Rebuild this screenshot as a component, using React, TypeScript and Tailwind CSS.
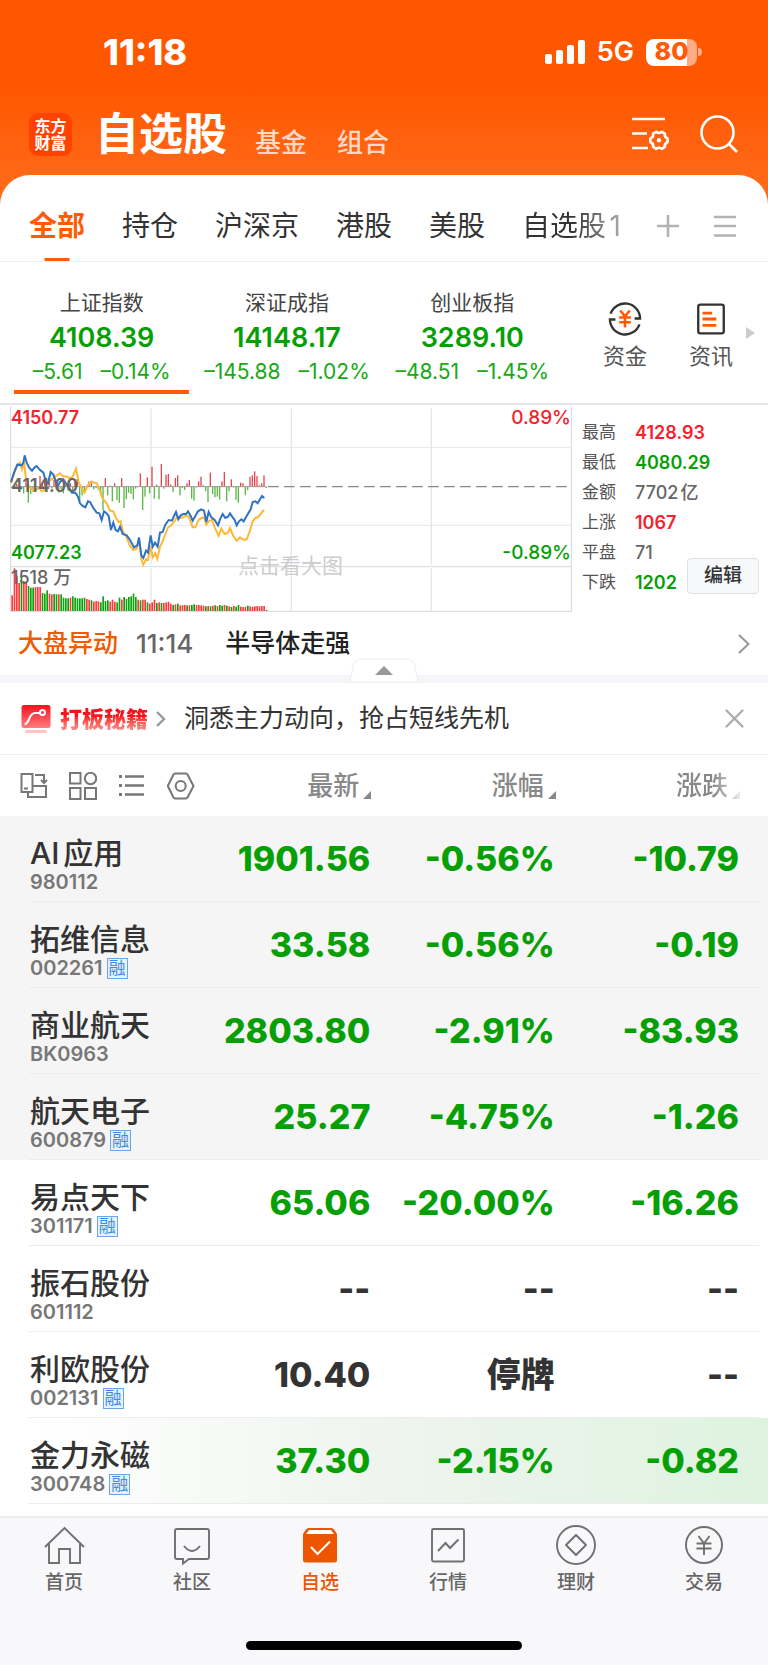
import { useState } from 'react'
import type { ReactNode } from 'react'

const GROUPS = ['全部', '持仓', '沪深京', '港股', '美股', '自选股1']

const INDEXES = [
  { name: '上证指数', value: '4108.39', change: '–5.61', percent: '–0.14%' },
  { name: '深证成指', value: '14148.17', change: '–145.88', percent: '–1.02%' },
  { name: '创业板指', value: '3289.10', change: '–48.51', percent: '–1.45%' },
]

const STATS = [
  { label: '最高', value: '4128.93', color: 'text-[#f5222d] font-semibold' },
  { label: '最低', value: '4080.29', color: 'text-[#06a006] font-semibold' },
  { label: '金额', value: '7702亿', color: 'text-[#666] font-medium' },
  { label: '上涨', value: '1067', color: 'text-[#f5222d] font-semibold' },
  { label: '平盘', value: '71', color: 'text-[#666] font-medium' },
  { label: '下跌', value: '1202', color: 'text-[#06a006] font-semibold' },
]

interface Stock {
  name: string
  code: string
  margin?: boolean
  pinned?: boolean
  flash?: boolean
  price: string
  percent: string
  change: string
}

const STOCKS: Stock[] = [
  { name: 'AI应用', code: '980112', pinned: true, price: '1901.56', percent: '-0.56%', change: '-10.79' },
  { name: '拓维信息', code: '002261', margin: true, pinned: true, price: '33.58', percent: '-0.56%', change: '-0.19' },
  { name: '商业航天', code: 'BK0963', pinned: true, price: '2803.80', percent: '-2.91%', change: '-83.93' },
  { name: '航天电子', code: '600879', margin: true, pinned: true, price: '25.27', percent: '-4.75%', change: '-1.26' },
  { name: '易点天下', code: '301171', margin: true, price: '65.06', percent: '-20.00%', change: '-16.26' },
  { name: '振石股份', code: '601112', price: '--', percent: '--', change: '--' },
  { name: '利欧股份', code: '002131', margin: true, price: '10.40', percent: '停牌', change: '--' },
  { name: '金力永磁', code: '300748', margin: true, flash: true, price: '37.30', percent: '-2.15%', change: '-0.82' },
]

// 分时线坐标，viewBox 单位
const PRICE_LINE =
  '33,258 42,230 52,206 65,208 70,200 74,178 80,200 88,216 96,224 104,214 110,210 118,220 130,230 138,256 144,262 152,228 160,236 168,258 172,272 180,258 190,250 198,262 208,276 216,290 226,290 234,302 240,322 248,330 256,334 264,316 270,318 280,336 290,350 298,352 305,372 312,346 318,350 326,360 333,402 340,380 347,402 354,406 360,392 368,414 380,418 390,432 402,454 412,448 417,424 424,478 430,486 438,464 444,470 452,418 458,452 465,440 473,452 480,410 488,408 496,386 506,372 516,374 522,360 528,348 535,370 542,358 550,354 558,354 564,346 572,360 578,374 586,360 594,346 604,340 612,344 619,378 626,348 634,364 644,372 654,388 660,370 668,354 676,366 684,362 690,352 698,364 704,372 710,388 717,376 724,370 731,376 740,360 752,340 758,318 766,316 773,322 780,310 786,300 793,306'

const AVG_LINE =
  '33,262 44,228 52,206 60,200 66,220 72,196 78,250 86,272 96,280 102,284 110,280 118,272 124,286 130,284 138,270 146,256 158,248 168,240 174,236 179,232 188,240 200,242 212,248 220,238 228,218 236,258 244,276 254,290 262,270 270,260 278,258 290,262 300,284 306,304 312,312 320,322 330,344 340,346 348,366 356,378 362,376 368,404 380,424 390,450 400,462 410,458 417,430 424,490 430,506 438,490 444,492 452,450 458,484 466,472 472,488 480,452 488,436 496,414 504,394 514,388 522,378 532,362 540,366 550,364 558,358 566,362 578,394 586,394 596,372 604,366 612,364 619,386 628,374 636,372 644,394 656,420 664,398 674,414 684,410 690,396 700,420 710,434 720,424 732,432 740,430 750,404 758,376 766,366 774,364 780,356 788,346 793,342'

// 多空力度：正数向上，负数向下
const FORCE = [
  -4, -6, 8, -10, -8, -20, 24, -48, -22, -16, 8, -10, 32, 6, 16, -16, 14, -6, 20, 6, -18, -8, -20, 4, -12, 10, -14, 22,
  24, -44, -26, -16, -4, 16, 18, -8, -4, -10, -24, -70, 26, -26, 3, -44, 10, -40, -48, 26, -64, -38, -18, -22, -38, -6,
  2, 40, -70, -30, 28, -20, 60, -36, 6, -38, 68, -6, 36, 38, 6, -16, 26, 34, -26, -4, -10, 10, 20, -36, -42, -2, 16, 30,
  4, -14, -46, 42, -22, -32, -30, -38, 16, 44, -44, -14, 22, -2, -40, -48, 12, 10, -26, -10, 30, 34, 46, 32, 4, 10, 34, -4,
]

// 成交量：r 涨 g 跌
const VOLUME =
  'r47 r128 r106 r84 g105 r90 r86 g75 g70 g70 r72 r72 r72 g54 g52 g62 r52 r50 g51 g50 r50 g50 g40 g38 g38 r40 g44 g40 g38 g38 g38 g40 r36 r34 g32 r28 r30 r29 g26 g44 g30 g32 r28 r34 r28 g26 g40 r34 g42 g36 g42 g44 g52 g42 r34 g32 r34 r34 g26 r22 r26 r34 g24 r26 g24 r24 r26 r28 r22 g18 r20 g22 r17 r18 r18 g17 r17 g18 g20 r18 r18 r17 r16 g14 r15 g14 r16 g17 r15 g18 g16 r18 g16 r14 g12 r15 g13 g18 r13 r12 r13 g16 r14 r13 r14 r15 r14 r15 r15 g3'

function MarketChart() {
  return (
    <div className="relative flex-1 text-[19px] leading-6">
      <svg viewBox="30 27 1686 621" preserveAspectRatio="none" className="block h-[207px] w-full" fill="none">
        <g stroke="#e4e6ec">
          <path d="M30 154H1716M30 388H1716" strokeWidth="3" />
          <path d="M453 37V506M453 517V645M874 37V506M874 517V645M1294 37V506M1294 517V645" strokeWidth="4" />
        </g>
        <path d="M30 512H1716M32 30V647M1714 30V647M30 646H1716" stroke="#d5d8df" strokeWidth="3" />
        {FORCE.map((v, i) => (
          <rect
            key={i}
            x={34 + i * 7}
            y={v > 0 ? 272 - v : 272}
            width="4"
            height={Math.abs(v)}
            fill={v > 0 ? '#e5484d' : '#5db84a'}
          />
        ))}
        <path d="M36 272H798" stroke="#999" strokeWidth="3" />
        <path d="M804 272H1712" stroke="#888" strokeWidth="4" strokeDasharray="32 16" />
        {VOLUME.split(' ').map((v, i) => {
          const h = Number(v.slice(1))
          return <rect key={i} x={34 + i * 7} y={645 - h} width="5" height={h} fill={v[0] === 'r' ? '#ff3b40' : '#0ba30b'} />
        })}
        <polyline points={AVG_LINE} stroke="#fdb933" strokeWidth="6" />
        <polyline points={PRICE_LINE} stroke="#2f72c4" strokeWidth="6" />
      </svg>
      <span className="absolute left-px top-px text-lg font-semibold leading-6 text-[#f5222d]">4150.77</span>
      <span className="absolute right-px top-px font-medium text-[#f5222d]">0.89%</span>
      <span className="absolute left-px top-[69px] text-lg font-semibold leading-6 text-[#666]">4114.00</span>
      <span className="absolute left-px top-[136px] text-lg font-semibold leading-6 text-[#06a006]">4077.23</span>
      <span className="absolute right-px top-[136px] font-medium text-[#06a006]">-0.89%</span>
      <span className="absolute left-px top-[161px] text-lg font-medium leading-6 text-[#666]">1518 万</span>
      <span className="absolute left-[228px] top-[149px] text-[21px] text-[#ccc]">点击看大图</span>
    </div>
  )
}

function StatusBar() {
  return (
    <div className="flex h-[104px] items-center justify-between pl-[103px] pr-[66px] text-white">
      <span className="text-[36px] font-extrabold">11:18</span>
      <div className="flex items-center gap-3">
        <svg width="40" height="26" viewBox="0 0 40 26" fill="#fff">
          <rect x="0" y="15" width="7" height="10" rx="2" />
          <rect x="11" y="11" width="7" height="14" rx="2" />
          <rect x="22" y="6" width="7" height="19" rx="2" />
          <rect x="33" y="1" width="7" height="24" rx="2" />
        </svg>
        <span className="text-[27px] font-semibold">5G</span>
        <div className="flex items-center gap-px">
          <div className="flex h-[27px] w-[51px] items-center justify-center rounded-lg bg-linear-to-r from-white from-80% to-[#ffab85] to-80% text-[25px] font-extrabold text-[#ff5a04]">
            80
          </div>
          <div className="h-2 w-1 rounded-r bg-[#ffab85]" />
        </div>
      </div>
    </div>
  )
}

function ListSettingsIcon() {
  return (
    <svg width="38" height="34" viewBox="0 0 38 34" fill="none" stroke="#fff" strokeWidth="2.6">
      <path d="M0 2H33M0 16.5H15M0 31H16" />
      <path
        d="M24.3 14.8q2.7 2.4 5.4 0l3.2 1.9q-.7 3.5 2.7 4.7v3.8q-3.4 1.2-2.7 4.7l-3.2 1.9q-2.7-2.4-5.4 0l-3.2-1.9q.7-3.5-2.7-4.7v-3.8q3.4-1.2 2.7-4.7z"
        strokeLinejoin="round"
      />
      <circle cx="27" cy="23.3" r="2.2" fill="#fff" stroke="none" />
    </svg>
  )
}

function SearchIcon() {
  return (
    <svg width="38" height="38" viewBox="0 0 38 38" fill="none" stroke="#fff" strokeWidth="2.6">
      <circle cx="17.5" cy="17.5" r="16" />
      <path d="M28.5 28.5L37 37" />
    </svg>
  )
}

function TopBar() {
  return (
    <div className="flex h-[71px] items-start justify-between pl-[29px] pr-[30px] text-white">
      <div className="flex items-start">
        <div className="mt-[9px] flex h-[43px] w-[43px] flex-col items-center justify-center rounded-[9px] bg-[#ff4200] text-[16px] font-bold leading-[17px]">
          <span>东方</span>
          <span>财富</span>
        </div>
        <h1 className="ml-[23px] text-[44px] font-bold leading-[60px]">自选股</h1>
        <a href="#fund" className="ml-7 mt-[21px] text-[26px] font-medium leading-9 text-[#ffd9c6]">
          基金
        </a>
        <a href="#portfolio" className="ml-[30px] mt-[21px] text-[26px] font-medium leading-9 text-[#ffd9c6]">
          组合
        </a>
      </div>
      <div className="mt-[11px] flex items-center gap-[30px]">
        <button aria-label="列表设置">
          <ListSettingsIcon />
        </button>
        <button aria-label="搜索">
          <SearchIcon />
        </button>
      </div>
    </div>
  )
}

function GroupTabs() {
  const [active, setActive] = useState('全部')
  return (
    <div className="flex h-[87px] items-center justify-between border-b border-[#eee] pl-[29px] pr-8 pt-4">
      <div className="flex h-full gap-[37px] text-[28px]">
        {GROUPS.map((group) => (
          <button
            key={group}
            onClick={() => setActive(group)}
            className={`relative whitespace-nowrap ${
              active === group
                ? 'font-bold text-[#ff5a04]'
                : group === '自选股1'
                  ? 'bg-linear-to-r from-[#333] from-50% to-[#aaa] bg-clip-text text-transparent'
                  : 'text-[#333]'
            }`}
          >
            {group}
            {active === group && (
              <span className="absolute bottom-0 left-1/2 h-[3px] w-[25px] -translate-x-1/2 bg-[#ff5a04]" />
            )}
          </button>
        ))}
      </div>
      <div className="flex items-center gap-[34px]">
        <button aria-label="添加分组">
          <svg width="24" height="24" viewBox="0 0 24 24" stroke="#b3b3b3" strokeWidth="2.6">
            <path d="M12 1V23M1 12H23" />
          </svg>
        </button>
        <button aria-label="分组列表">
          <svg width="22" height="24" viewBox="0 0 22 24" stroke="#b3b3b3" strokeWidth="2.6">
            <path d="M0 3H22M0 12H22M0 21.5H22" />
          </svg>
        </button>
      </div>
    </div>
  )
}

function IndexPanel() {
  const [current, setCurrent] = useState(0)
  return (
    <div className="flex h-[141px] pl-[14px]">
      <div className="grid flex-1 grid-cols-3 gap-[10px] pt-6">
        {INDEXES.map((item, i) => (
          <button
            key={item.name}
            onClick={() => setCurrent(i)}
            className={`flex h-[108px] flex-col items-center whitespace-nowrap border-b-4 ${
              current === i ? 'border-[#ff5a04]' : 'border-transparent'
            }`}
          >
            <span className="text-[21px] leading-[34px] text-[#444]">{item.name}</span>
            <span className="text-[27px] font-semibold leading-9 text-[#06a006]">{item.value}</span>
            <span className="flex gap-[18px] text-[21px] leading-8 text-[#18a818]">
              <span>{item.change}</span>
              <span>{item.percent}</span>
            </span>
          </button>
        ))}
      </div>
      <div className="flex w-[208px] items-start pl-[22px] pt-10 text-[22px] leading-8 text-[#555]">
        <button className="flex w-[86px] flex-col items-center">
          <svg width="34" height="34" viewBox="0 0 32 32" fill="none" stroke="#333" strokeWidth="2.2">
            <path d="M2.400 11A14.300 14.300 0 0 1 30.200 15.500H25M29.600 21A14.300 14.300 0 0 1 1.800 16.500H7" />
            <path d="M11.500 8L16 13.500L20.500 8M16 13V24M10.500 14.500H21.500M10.500 19H21.500" stroke="#ff5a04" strokeWidth="2.4" />
          </svg>
          <span className="mt-1">资金</span>
        </button>
        <button className="flex w-[86px] flex-col items-center">
          <svg width="34" height="34" viewBox="0 0 32 32" fill="none" stroke="#333" strokeWidth="2.2">
            <rect x="4" y="2.5" width="24" height="27" rx="2" />
            <path d="M8 10.500H17M8 16H21M8 22H21" stroke="#ff5a04" strokeWidth="2.6" />
          </svg>
          <span className="mt-1">资讯</span>
        </button>
      </div>
      <button aria-label="更多" className="-ml-[22px] w-[22px]">
        <svg width="9" height="12" viewBox="0 0 9 12" fill="#ccc">
          <path d="M0 0L9 6L0 12Z" />
        </svg>
      </button>
    </div>
  )
}

function ChartPanel() {
  return (
    <div className="flex border-t-2 border-[#e4e6ec] pl-[10px]">
      <MarketChart />
      <div className="relative w-[196px] pl-[10px] pt-[13px]">
        <dl>
          {STATS.map((stat) => (
            <div key={stat.label} className="flex h-[30px] items-center">
              <dt className="w-[53px] text-[17px] text-[#555]">{stat.label}</dt>
              <dd className={`text-lg ${stat.color}`}>{stat.value}</dd>
            </div>
          ))}
        </dl>
        <button className="absolute bottom-[18px] right-[9px] h-9 w-[72px] rounded border border-[#dfe1e6] bg-[#f7f8fa] text-[19px] font-medium text-[#333]">
          编辑
        </button>
      </div>
    </div>
  )
}

function NewsRow() {
  return (
    <div className="relative border-b-8 border-[#f5f6f9]">
      <a href="#news" className="flex h-[63px] items-center pl-[18px] pr-[18px] text-[25px] font-medium">
        <span className="text-[#f05a00]">大盘异动</span>
        <span className="ml-[18px] text-[26px] text-[#666]">11:14</span>
        <span className="ml-8 flex-1 text-[#222]">半导体走强</span>
        <svg width="12" height="22" viewBox="0 0 12 22" fill="none" stroke="#999" strokeWidth="2">
          <path d="M1 2L10.500 11L1 20" />
        </svg>
      </a>
      <button aria-label="收起" className="absolute -bottom-2 left-1/2 -translate-x-1/2">
        <svg width="70" height="25" viewBox="0 0 70 25" fill="#fff" stroke="#eceef1">
          <path d="M1 24C4 14 2 1 12 1H58C68 1 66 14 69 24Z" />
          <path d="M26 17L35 8L44 17Z" fill="#999" stroke="none" />
        </svg>
      </button>
    </div>
  )
}

function PromoRow() {
  const [open, setOpen] = useState(true)
  if (!open) return null
  return (
    <div className="flex h-[72px] items-center border-b border-[#eee] pl-[21px] pr-6">
      <svg width="30" height="28" viewBox="0 0 30 28" fill="none">
        <defs>
          <linearGradient id="promo" x1="0" y1="0" x2="0" y2="1">
            <stop offset="0" stopColor="#f9121c" />
            <stop offset="1" stopColor="#ff7d80" />
          </linearGradient>
        </defs>
        <rect x="0.5" width="29" height="23" rx="2.5" fill="url(#promo)" />
        <rect x="4" y="25" width="22" height="3" rx="1.5" fill="#ffc4c4" />
        <path d="M4.500 19C9 17 8 8 14 8H19" stroke="#fff" strokeWidth="2" strokeLinecap="round" />
        <circle cx="21.5" cy="7.5" r="2.5" stroke="#fff" strokeWidth="2" />
      </svg>
      <span className="ml-[9px] bg-linear-to-b from-[#f9121c] from-40% to-[#ff9a9c] bg-clip-text text-[22px] font-black leading-7 text-transparent">
        打板秘籍
      </span>
      <svg className="ml-2" width="10" height="18" viewBox="0 0 10 18" fill="none" stroke="#999" strokeWidth="2.4">
        <path d="M1 2L8 9L1 16" />
      </svg>
      <span className="ml-[18px] flex-1 text-[25px] text-[#333]">洞悉主力动向，抢占短线先机</span>
      <button aria-label="关闭" onClick={() => setOpen(false)}>
        <svg width="19" height="19" viewBox="0 0 19 19" fill="none" stroke="#aaa" strokeWidth="2.2" strokeLinecap="round">
          <path d="M1.500 1.500L17.500 17.500M17.500 1.500L1.500 17.500" />
        </svg>
      </button>
    </div>
  )
}

function ToolIcon({ label, children }: { label: string; children: ReactNode }) {
  return (
    <button aria-label={label}>
      <svg width="28" height="28" viewBox="0 0 28 28" fill="none" stroke="#777" strokeWidth="2">
        {children}
      </svg>
    </button>
  )
}

function SortButton({ label }: { label: string }) {
  return (
    <button className="inline-flex items-end gap-1">
      {label}
      <svg className="mb-[5px]" width="8" height="8" viewBox="0 0 7 7" fill="#888">
        <path d="M7 0V7H0Z" />
      </svg>
    </button>
  )
}

function valueColor(value: string) {
  return /^-\d/.test(value) ? 'text-[#06a006]' : 'text-[#333]'
}

function StockRow({ stock }: { stock: Stock }) {
  const priceColor = valueColor(stock.change)
  return (
    <tr
      className={`relative h-[86px] ${
        stock.pinned ? 'bg-[#f5f5f5]' : stock.flash ? 'bg-linear-to-r from-white from-5% via-[#eff4ef] via-50% to-[#def3df]' : ''
      }`}
    >
      <td className="pl-[30px] pt-[19px] align-top after:absolute after:bottom-0 after:left-[29px] after:right-[9px] after:h-px after:bg-[#ececec]">
        <div className="whitespace-nowrap text-[30px] font-medium leading-9 text-[#333]">{stock.name}</div>
        <div className="flex items-center gap-1 text-xl font-semibold leading-[22px] text-[#777]">
          {stock.code}
          {stock.margin && (
            <span className="flex h-[21px] w-[21px] items-center justify-center border border-[#6ba5ec] bg-[#e8f2fd] text-[17px] font-normal text-[#3d8be8]">
              融
            </span>
          )}
        </div>
      </td>
      <td className={`pr-[29px] text-right ${priceColor}`}>{stock.price}</td>
      <td className={`pr-[29px] text-right ${valueColor(stock.percent)}`}>{stock.percent}</td>
      <td className={`pr-[29px] text-right ${priceColor}`}>{stock.change}</td>
    </tr>
  )
}

function StockTable() {
  return (
    <table className="mb-3 w-full table-fixed">
      <colgroup>
        <col />
        <col className="w-[24%]" />
        <col className="w-[24%]" />
        <col className="w-[24%]" />
      </colgroup>
      <thead className="text-[26px] font-medium leading-9 text-[#888]">
        <tr className="h-[61px]">
          <th className="pl-5 font-medium">
            <div className="flex gap-[21px]">
              <ToolIcon label="横屏">
                <path d="M8 20H1.500V2H12.500V14M4 16.500H8M15 3H24V10M21 8L24 11L27 8M12.500 14H26V25H8V20L12.500 20Z" />
              </ToolIcon>
              <ToolIcon label="宫格">
                <rect x="1" y="1" width="10.5" height="10.5" />
                <circle cx="21.5" cy="6.5" r="5.7" />
                <rect x="1" y="16" width="10.5" height="11" />
                <rect x="16" y="16" width="11" height="11" />
              </ToolIcon>
              <ToolIcon label="列表">
                <path d="M7 4.500H26M7 13.500H26M7 22.500H26" strokeWidth="2.6" />
                <path d="M1 4.500H4M1 13.500H4M1 22.500H4" strokeWidth="3" />
              </ToolIcon>
              <ToolIcon label="设置">
                <path d="M8 1.500H19L20.500 2.500L26.500 14L20.500 25.500L19 26.500H8L6.500 25.500L0.800 14L6.500 2.500Z" />
                <circle cx="13.7" cy="14" r="5" />
              </ToolIcon>
            </div>
          </th>
          <th className="pr-7 text-right font-medium">
            <SortButton label="最新" />
          </th>
          <th className="pr-7 text-right font-medium">
            <SortButton label="涨幅" />
          </th>
          <th className="mask-r-from-70% mask-r-to-88% pr-7 text-right font-medium">
            <SortButton label="涨跌" />
          </th>
        </tr>
      </thead>
      <tbody className="text-[34px] font-extrabold leading-[44px]">
        {STOCKS.map((stock) => (
          <StockRow key={stock.code} stock={stock} />
        ))}
      </tbody>
    </table>
  )
}

const NAV: { label: string; icon: ReactNode }[] = [
  {
    label: '首页',
    icon: <path d="M1 21L20.500 2L40 21M5 18V37H15V23H26V37H36V18" />,
  },
  {
    label: '社区',
    icon: (
      <>
        <path d="M5 3H35Q37 3 37 5V31Q37 33 35 33H17L11 37.500V33H5Q3 33 3 31V5Q3 3 5 3Z" />
        <path d="M12 20Q20 30 28 20" />
      </>
    ),
  },
  {
    label: '自选',
    icon: (
      <>
        <path
          d="M8.500 2H31.500Q33 2 34 3.500L37 8V34Q37 36.500 34.500 36.500H5.500Q3 36.500 3 34V8L6 3.500Q7 2 8.500 2Z"
          fill="#ee5500"
          stroke="none"
        />
        <path d="M9 4H31L34 8H6Z" fill="#fff" stroke="none" />
        <path d="M11 21L17.500 28L30 15.500" stroke="#fff" strokeWidth="2" />
      </>
    ),
  },
  {
    label: '行情',
    icon: (
      <>
        <rect x="4" y="3" width="32" height="32.5" rx="1.5" />
        <path d="M10 25L17.500 17L22 22L30.500 13.500" />
      </>
    ),
  },
  {
    label: '理财',
    icon: (
      <>
        <circle cx="20" cy="19" r="19" />
        <path d="M20 9L30 19L20 29L10 19Z" strokeLinejoin="round" />
      </>
    ),
  },
  {
    label: '交易',
    icon: (
      <>
        <circle cx="20" cy="19" r="18" />
        <path d="M14.500 10L20 17.500L25.500 10M20 17V29M12.500 17.500H27.500M12.500 22.500H27.500" />
      </>
    ),
  },
]

function BottomNav() {
  return (
    <nav className="border-t-2 border-[#ececf0] bg-[#f8f8fb]">
      <div className="flex h-[123px] items-start pt-2">
        {NAV.map((item) => (
          <a
            key={item.label}
            href={`#${item.label}`}
            className={`flex flex-1 flex-col items-center gap-[5px] text-[19px] font-medium leading-7 ${
              item.label === '自选' ? 'text-[#ee5500]' : 'text-[#666]'
            }`}
          >
            <svg width="40" height="38" viewBox="0 0 40 38" fill="none" stroke="#707070" strokeWidth="1.9" overflow="visible">
              {item.icon}
            </svg>
            {item.label}
          </a>
        ))}
      </div>
      <div className="flex h-6 justify-center">
        <div className="h-[9px] w-[36%] rounded-full bg-black" />
      </div>
    </nav>
  )
}

export default function App() {
  return (
    <div className="min-h-screen bg-white font-['Inter','Noto_Sans_CJK_SC',sans-serif] [text-autospace:normal]">
      <header className="bg-linear-to-b from-[#ff5700] from-35% to-[#ff6f1c] to-80%">
        <StatusBar />
        <TopBar />
        <div className="rounded-t-[30px] bg-white">
          <GroupTabs />
        </div>
      </header>
      <main>
        <IndexPanel />
        <ChartPanel />
        <NewsRow />
        <PromoRow />
        <StockTable />
      </main>
      <BottomNav />
    </div>
  )
}
